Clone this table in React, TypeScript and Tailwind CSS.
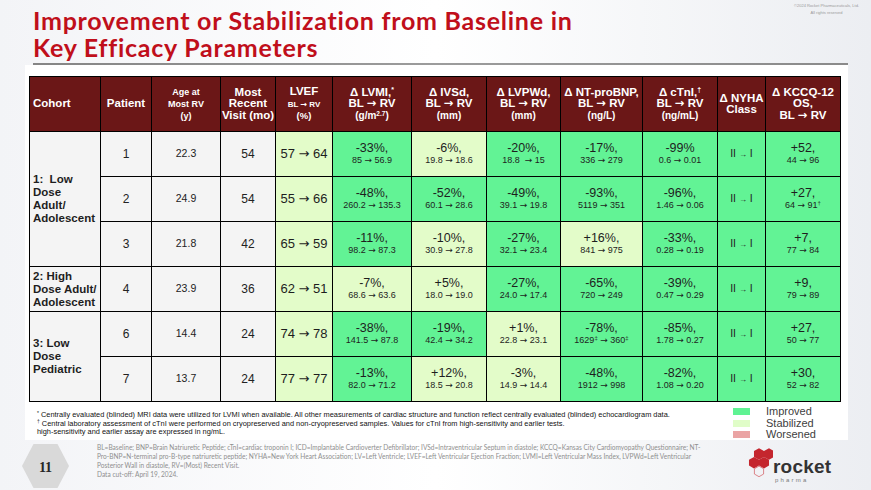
import type { ReactNode } from "react";

const IMP = "bg-[#62f395]";
const STB = "bg-[#e3fcc9]";

type Cell = { t: ReactNode; b?: ReactNode; s: string; nyha?: boolean };

interface Row {
  cohort?: { label: ReactNode; span: number };
  patient: string;
  age: string;
  visit: string;
  cells: Cell[];
}

// heavier arrow like the slide's wingdings one
function Arr() {
  return <span style={{ fontFamily: '"DejaVu Sans", sans-serif' }}>→</span>;
}

function withArrows(v: ReactNode): ReactNode {
  if (typeof v !== "string") return v;
  const parts = v.split("→");
  return parts.map((p, i) => (
    <span key={i}>
      {p}
      {i < parts.length - 1 && <Arr />}
    </span>
  ));
}

const nyha: Cell = { t: "II → I", s: IMP, nyha: true };

const rows: Row[] = [
  {
    cohort: {
      label: (
        <>
          1:&nbsp; Low
          <br />
          Dose
          <br />
          Adult/
          <br />
          Adolescent
        </>
      ),
      span: 3,
    },
    patient: "1",
    age: "22.3",
    visit: "54",
    cells: [
      { t: "57 → 64", s: STB },
      { t: "-33%,", b: "85 → 56.9", s: IMP },
      { t: "-6%,", b: "19.8 → 18.6", s: STB },
      { t: "-20%,", b: "18.8  → 15", s: IMP },
      { t: "-17%,", b: "336 → 279", s: IMP },
      { t: "-99%", b: "0.6 → 0.01", s: IMP },
      nyha,
      { t: "+52,", b: "44 → 96", s: IMP },
    ],
  },
  {
    patient: "2",
    age: "24.9",
    visit: "54",
    cells: [
      { t: "55 → 66", s: STB },
      { t: "-48%,", b: "260.2 → 135.3", s: IMP },
      { t: "-52%,", b: "60.1 → 28.6", s: IMP },
      { t: "-49%,", b: "39.1 → 19.8", s: IMP },
      { t: "-93%,", b: "5119 → 351", s: IMP },
      { t: "-96%,", b: "1.46 → 0.06", s: IMP },
      nyha,
      {
        t: "+27,",
        b: (
          <>
            64 <Arr /> 91<sup className="text-[6px]">†</sup>
          </>
        ),
        s: IMP,
      },
    ],
  },
  {
    patient: "3",
    age: "21.8",
    visit: "42",
    cells: [
      { t: "65 → 59", s: STB },
      { t: "-11%,", b: "98.2 → 87.3", s: IMP },
      { t: "-10%,", b: "30.9 → 27.8", s: STB },
      { t: "-27%,", b: "32.1 → 23.4", s: IMP },
      { t: "+16%,", b: "841 → 975", s: STB },
      { t: "-33%,", b: "0.28 → 0.19", s: IMP },
      nyha,
      { t: "+7,", b: "77 → 84", s: IMP },
    ],
  },
  {
    cohort: {
      label: (
        <>
          2: High
          <br />
          Dose Adult/
          <br />
          Adolescent
        </>
      ),
      span: 1,
    },
    patient: "4",
    age: "23.9",
    visit: "36",
    cells: [
      { t: "62 → 51", s: STB },
      { t: "-7%,", b: "68.6 → 63.6", s: STB },
      { t: "+5%,", b: "18.0 → 19.0", s: STB },
      { t: "-27%,", b: "24.0 → 17.4", s: IMP },
      { t: "-65%,", b: "720 → 249", s: IMP },
      { t: "-39%,", b: "0.47 → 0.29", s: IMP },
      nyha,
      { t: "+9,", b: "79 → 89", s: IMP },
    ],
  },
  {
    cohort: {
      label: (
        <>
          3: Low
          <br />
          Dose
          <br />
          Pediatric
        </>
      ),
      span: 2,
    },
    patient: "6",
    age: "14.4",
    visit: "24",
    cells: [
      { t: "74 → 78", s: STB },
      { t: "-38%,", b: "141.5 → 87.8", s: IMP },
      { t: "-19%,", b: "42.4 → 34.2", s: IMP },
      { t: "+1%,", b: "22.8 → 23.1", s: STB },
      {
        t: "-78%,",
        b: (
          <>
            1629<sup className="text-[6px]">‡</sup> <Arr /> 360<sup className="text-[6px]">‡</sup>
          </>
        ),
        s: IMP,
      },
      { t: "-85%,", b: "1.78 → 0.27", s: IMP },
      nyha,
      { t: "+27,", b: "50 → 77", s: IMP },
    ],
  },
  {
    patient: "7",
    age: "13.7",
    visit: "24",
    cells: [
      { t: "77 → 77", s: STB },
      { t: "-13%,", b: "82.0 → 71.2", s: IMP },
      { t: "+12%,", b: "18.5 → 20.8", s: STB },
      { t: "-3%,", b: "14.9 → 14.4", s: STB },
      { t: "-48%,", b: "1912 → 998", s: IMP },
      { t: "-82%,", b: "1.08 → 0.20", s: IMP },
      nyha,
      { t: "+30,", b: "52 → 82", s: IMP },
    ],
  },
];

const colWidths = [
  "w-[71px]",
  "w-[51px]",
  "w-[69px]",
  "w-[55px]",
  "w-[57px]",
  "w-[79px]",
  "w-[75px]",
  "w-[74px]",
  "w-[82px]",
  "w-[75px]",
  "w-[48px]",
  "w-[75px]",
];

function Head({ children, left }: { children: ReactNode; left?: boolean }) {
  return (
    <th
      className={`border border-black bg-[#6b1717] text-white font-bold text-[11.5px] leading-[11.5px] align-middle ${
        left ? "text-left pl-[3px]" : "text-center"
      }`}
    >
      {children}
    </th>
  );
}

function DataCell({ c }: { c: Cell }) {
  if (c.nyha) {
    return (
      <td className={`border border-black ${c.s} text-center text-[10.5px] text-[#222]`}>
        II <span className="text-[8px]">→</span> I
      </td>
    );
  }
  return (
    <td className={`border border-black ${c.s} text-center text-[#1e1e1e]`}>
      <div className="flex flex-col items-center">
        <span className={c.b ? "text-[12.5px] leading-[13px]" : "text-[13px] leading-[14px] whitespace-pre"}>
          {withArrows(c.t)}
        </span>
        {c.b && <span className="text-[9px] leading-[11px] whitespace-pre">{withArrows(c.b)}</span>}
      </div>
    </td>
  );
}

function Legend() {
  const items = [
    { label: "Improved", color: "bg-[#5ff393]" },
    { label: "Stabilized", color: "bg-[#e0fdc8]" },
    { label: "Worsened", color: "bg-[#eaa4a4]" },
  ];
  return (
    <div className="flex flex-col">
      {items.map((it) => (
        <div key={it.label} className="flex items-center h-[11.5px]">
          <div className={`w-[17px] h-[7px] ${it.color}`} />
          <span className="ml-[16px] text-[11px] leading-[11.5px] text-[#404040]">{it.label}</span>
        </div>
      ))}
    </div>
  );
}

function RocketLogo() {
  const hex = (cx: number, cy: number, r: number) =>
    [-90, -30, 30, 90, 150, 210]
      .map((a) => {
        const rad = (a * Math.PI) / 180;
        return `${(cx + r * Math.cos(rad)).toFixed(2)},${(cy + r * Math.sin(rad)).toFixed(2)}`;
      })
      .join(" ");
  return (
    <div className="flex">
      <svg width="25" height="34" viewBox="0 0 25 34">
        <polygon points={hex(11, 8, 5.8)} fill="#c4262e" />
        <polygon points={hex(21, 8, 5.8)} fill="#c4262e" />
        <polygon points={hex(6, 16.7, 5.8)} fill="#c4262e" />
        <polygon points={hex(16, 16.7, 5.8)} fill="#c4262e" />
        <polygon points={hex(11, 25.4, 5.3)} fill="none" stroke="#d56a6e" strokeWidth="0.8" />
      </svg>
      <div className="flex flex-col mt-[11px]">
        <span className="text-[19px] leading-[19px] font-bold text-[#333333] tracking-[0.2px]">rocket</span>
        <span className="text-[6px] leading-[8px] text-[#7a7a7a] tracking-[2.2px] ml-[2px]">pharma</span>
      </div>
    </div>
  );
}

export default function App() {
  return (
    <div
      className="w-[871px] h-[490px] overflow-hidden flex flex-col bg-gradient-to-r from-[#f3f4f7] via-white to-[#eceef2]"
      style={{ fontFamily: '"Liberation Sans", Arial, sans-serif' }}
    >
      <div className="h-[65px] flex justify-between pl-[33px] pr-[12px]">
        <h1
          className="pt-[7px] text-[25px] leading-[27px] font-bold text-[#c00f1b] tracking-[0.75px]"
          style={{ fontFamily: "Lato, sans-serif" }}
        >
          Improvement or Stabilization from Baseline in
          <br />
          Key Efficacy Parameters
        </h1>
        <div className="pt-[3px] text-[4px] leading-[6.5px] text-[#9a9a9a] text-center">
          ©2024 Rocket Pharmaceuticals, Ltd.
          <br />
          All rights reserved
        </div>
      </div>
      <div className="ml-[33px] w-[815px] h-[2px] bg-gradient-to-r from-[#858585] via-[#9c9c9c] to-[#8a8a8a]" />

      <div className="ml-[25px] w-[823px] h-[375px] bg-white pt-[11px] pl-[4px]">
        <table className="table-fixed border-collapse w-[811px]">
          <colgroup>
            {colWidths.map((w, i) => (
              <col key={i} className={w} />
            ))}
          </colgroup>
          <thead>
            <tr className="h-[55px]">
              <Head left>Cohort</Head>
              <Head>Patient</Head>
              <Head>
                <span className="text-[9px] leading-[12px] block">
                  Age at
                  <br />
                  Most RV
                  <br />
                  (y)
                </span>
              </Head>
              <Head>
                Most
                <br />
                Recent
                <br />
                Visit (mo)
              </Head>
              <Head>
                LVEF
                <br />
                <span className="text-[8px]">
                  BL <Arr /> RV
                </span>
                <br />
                <span className="text-[9.5px]">(%)</span>
              </Head>
              <Head>
                Δ LVMI,<sup className="text-[7px]">*</sup>
                <br />
                BL <Arr /> RV
                <br />
                <span className="text-[10px]">
                  (g/m<sup className="text-[6.5px]">2.7</sup>)
                </span>
              </Head>
              <Head>
                Δ IVSd,
                <br />
                BL <Arr /> RV
                <br />
                <span className="text-[10px]">(mm)</span>
              </Head>
              <Head>
                Δ LVPWd,
                <br />
                BL <Arr /> RV
                <br />
                <span className="text-[10px]">(mm)</span>
              </Head>
              <Head>
                Δ NT-proBNP,
                <br />
                BL <Arr /> RV
                <br />
                <span className="text-[10px]">(ng/L)</span>
              </Head>
              <Head>
                Δ cTnI,<sup className="text-[7px]">†</sup>
                <br />
                BL <Arr /> RV
                <br />
                <span className="text-[10px]">(ng/mL)</span>
              </Head>
              <Head>
                Δ NYHA
                <br />
                Class
              </Head>
              <Head>
                Δ KCCQ-12
                <br />
                OS,
                <br />
                BL <Arr /> RV
              </Head>
            </tr>
          </thead>
          <tbody>
            {rows.map((r) => (
              <tr key={r.patient} className="h-[45px]">
                {r.cohort && (
                  <td
                    rowSpan={r.cohort.span}
                    className="border border-black bg-[#f4f4f4] text-left pl-[3px] align-middle font-bold text-[11.5px] leading-[13px] text-[#1e1e1e]"
                  >
                    {r.cohort.label}
                  </td>
                )}
                <td className="border border-black bg-[#f4f4f4] text-center text-[12px] text-[#222]">{r.patient}</td>
                <td className="border border-black bg-[#f4f4f4] text-center text-[10.5px] text-[#222]">{r.age}</td>
                <td className="border border-black bg-[#f4f4f4] text-center text-[12px] text-[#222]">{r.visit}</td>
                {r.cells.map((c, i) => (
                  <DataCell key={i} c={c} />
                ))}
              </tr>
            ))}
          </tbody>
        </table>

        <div className="flex items-start mt-[4px]">
          <div className="w-[704px] pl-[8px] pt-[5px] text-[7.4px] leading-[8.5px] text-[#111] whitespace-nowrap">
            <div>
              <sup className="text-[5px]">*</sup> Centrally evaluated (blinded) MRI data were utilized for LVMI when available. All other measurements of
              cardiac structure and function reflect centrally evaluated (blinded) echocardiogram data.
            </div>
            <div>
              <sup className="text-[5px]">†</sup> Central laboratory assessment of cTnI were performed on cryopreserved and non-cryopreserved samples.
              Values for cTnI from high-sensitivity and earlier tests.
            </div>
            <div>high-sensitivity and earlier assay are expressed in ng/mL.</div>
          </div>
          <Legend />
        </div>
      </div>

      <div className="flex items-start">
        <svg className="ml-[22px] mt-[4px] shrink-0" width="47" height="46" viewBox="0 0 47 46">
          <polygon points="11.5,0 35.5,0 47,22 35.5,44 11.5,44 0,22" fill="#d9d9d9" />
          <text
            x="23.5"
            y="28"
            textAnchor="middle"
            fontSize="14"
            fontWeight="bold"
            fill="#262626"
            fontFamily="'Liberation Serif', serif"
          >
            11
          </text>
        </svg>
        <div
          className="ml-[28px] w-[620px] pt-[3px] text-[6.55px] leading-[9px] text-[#8f8f8f] whitespace-nowrap"
          style={{ fontFamily: "Lato, sans-serif" }}
        >
          <div>
            BL=Baseline; BNP=Brain Natriuretic Peptide; cTnI=cardiac troponin I; ICD=Implantable Cardioverter Defibrillator;
            IVSd=Intraventricular Septum in diastole; KCCQ=Kansas City Cardiomyopathy Questionnaire; NT-
          </div>
          <div>
            Pro-BNP=N-terminal pro-B-type natriuretic peptide; NYHA=New York Heart Association; LV=Left Ventricle; LVEF=Left
            Ventricular Ejection Fraction; LVMI=Left Ventricular Mass Index, LVPWd=Left Ventricular
          </div>
          <div>Posterior Wall in diastole, RV=(Most) Recent Visit.</div>
          <div>Data cut-off: April 19, 2024.</div>
        </div>
        <div className="ml-[31px] mt-[6px]">
          <RocketLogo />
        </div>
      </div>
    </div>
  );
}
